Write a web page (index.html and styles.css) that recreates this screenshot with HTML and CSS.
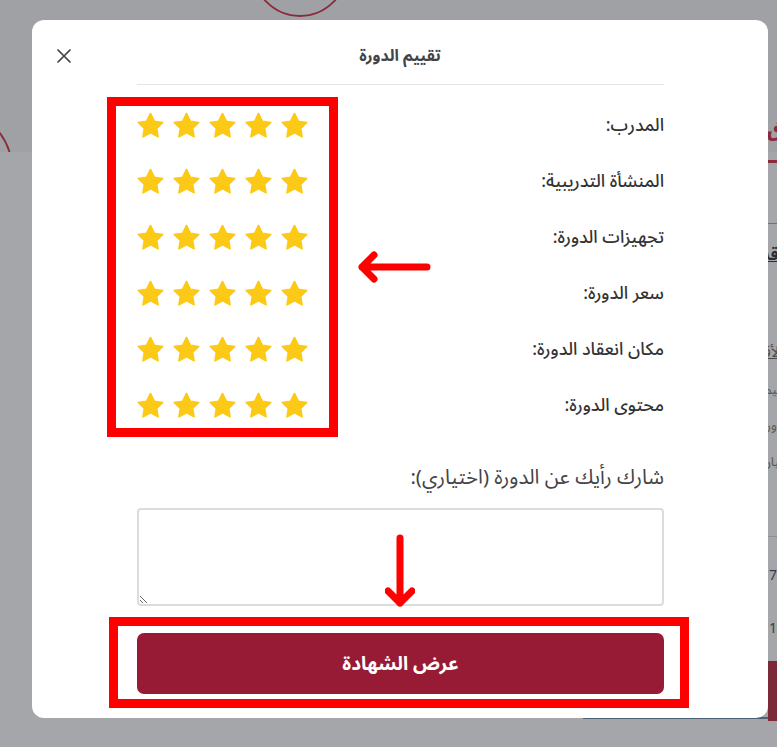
FILE: index.html
```html
<!DOCTYPE html>
<html lang="ar">
<head>
<meta charset="utf-8">
<title>تقييم الدورة</title>
<link rel="stylesheet" href="styles.css">
</head>
<body>
<div class="page">
  <svg class="band" width="777" height="152" viewBox="0 0 777 152">
    <rect x="0" y="0" width="777" height="152" fill="#a0a1a5"/>
    <circle cx="300" cy="-31" r="47" fill="none" stroke="#8a2b3b" stroke-width="1.8"/>
    <circle cx="-50" cy="170" r="62" fill="none" stroke="#8a2b3b" stroke-width="1.8"/>
    <text x="766" y="136" fill="#8a2b3b" font-size="22" font-weight="700" font-family="DejaVu Sans, sans-serif">ق</text>
  </svg>
  <div class="lower">
    <div class="side-card">
      <div class="sc-bar"></div>
      <div class="sc-blue"></div>
      <div class="sc-title">أقسام الدورة</div>
      <div class="sc-link">الأقسام</div>
      <div class="sc-text">قيمة</div>
      <div class="sc-text">دورة</div>
      <div class="sc-text">بيان</div>
      <div class="sc-line"></div>
      <div class="sc-num">7</div>
      <div class="sc-num">1</div>
      <div class="sc-btn"></div>
    </div>
  </div>
</div>

<div class="overlay">
  <div class="modal">
    <div class="modal-header">
      <span></span>
      <h2 class="modal-title">تقييم الدورة</h2>
      <button class="close-btn" aria-label="إغلاق">
        <svg width="16" height="16" viewBox="0 0 16 16"><path d="M2 2 L14 14 M14 2 L2 14" stroke="#444" stroke-width="1.7" stroke-linecap="round" fill="none"/></svg>
      </button>
    </div>
    <div class="modal-body">
      <div class="divider"></div>
      <div class="ratings">
        <div class="rating-row"><span class="rating-label">المدرب:</span><div class="stars"><svg class="star" viewBox="0 0 24 24"><path d="M12 1.3L15.38 8.15 22.94 9.25 17.47 14.58 18.76 22.1 12 18.55 5.24 22.1 6.53 14.58 1.06 9.25 8.62 8.15Z"/></svg><svg class="star" viewBox="0 0 24 24"><path d="M12 1.3L15.38 8.15 22.94 9.25 17.47 14.58 18.76 22.1 12 18.55 5.24 22.1 6.53 14.58 1.06 9.25 8.62 8.15Z"/></svg><svg class="star" viewBox="0 0 24 24"><path d="M12 1.3L15.38 8.15 22.94 9.25 17.47 14.58 18.76 22.1 12 18.55 5.24 22.1 6.53 14.58 1.06 9.25 8.62 8.15Z"/></svg><svg class="star" viewBox="0 0 24 24"><path d="M12 1.3L15.38 8.15 22.94 9.25 17.47 14.58 18.76 22.1 12 18.55 5.24 22.1 6.53 14.58 1.06 9.25 8.62 8.15Z"/></svg><svg class="star" viewBox="0 0 24 24"><path d="M12 1.3L15.38 8.15 22.94 9.25 17.47 14.58 18.76 22.1 12 18.55 5.24 22.1 6.53 14.58 1.06 9.25 8.62 8.15Z"/></svg></div></div>
        <div class="rating-row"><span class="rating-label">المنشأة التدريبية:</span><div class="stars"><svg class="star" viewBox="0 0 24 24"><path d="M12 1.3L15.38 8.15 22.94 9.25 17.47 14.58 18.76 22.1 12 18.55 5.24 22.1 6.53 14.58 1.06 9.25 8.62 8.15Z"/></svg><svg class="star" viewBox="0 0 24 24"><path d="M12 1.3L15.38 8.15 22.94 9.25 17.47 14.58 18.76 22.1 12 18.55 5.24 22.1 6.53 14.58 1.06 9.25 8.62 8.15Z"/></svg><svg class="star" viewBox="0 0 24 24"><path d="M12 1.3L15.38 8.15 22.94 9.25 17.47 14.58 18.76 22.1 12 18.55 5.24 22.1 6.53 14.58 1.06 9.25 8.62 8.15Z"/></svg><svg class="star" viewBox="0 0 24 24"><path d="M12 1.3L15.38 8.15 22.94 9.25 17.47 14.58 18.76 22.1 12 18.55 5.24 22.1 6.53 14.58 1.06 9.25 8.62 8.15Z"/></svg><svg class="star" viewBox="0 0 24 24"><path d="M12 1.3L15.38 8.15 22.94 9.25 17.47 14.58 18.76 22.1 12 18.55 5.24 22.1 6.53 14.58 1.06 9.25 8.62 8.15Z"/></svg></div></div>
        <div class="rating-row"><span class="rating-label">تجهيزات الدورة:</span><div class="stars"><svg class="star" viewBox="0 0 24 24"><path d="M12 1.3L15.38 8.15 22.94 9.25 17.47 14.58 18.76 22.1 12 18.55 5.24 22.1 6.53 14.58 1.06 9.25 8.62 8.15Z"/></svg><svg class="star" viewBox="0 0 24 24"><path d="M12 1.3L15.38 8.15 22.94 9.25 17.47 14.58 18.76 22.1 12 18.55 5.24 22.1 6.53 14.58 1.06 9.25 8.62 8.15Z"/></svg><svg class="star" viewBox="0 0 24 24"><path d="M12 1.3L15.38 8.15 22.94 9.25 17.47 14.58 18.76 22.1 12 18.55 5.24 22.1 6.53 14.58 1.06 9.25 8.62 8.15Z"/></svg><svg class="star" viewBox="0 0 24 24"><path d="M12 1.3L15.38 8.15 22.94 9.25 17.47 14.58 18.76 22.1 12 18.55 5.24 22.1 6.53 14.58 1.06 9.25 8.62 8.15Z"/></svg><svg class="star" viewBox="0 0 24 24"><path d="M12 1.3L15.38 8.15 22.94 9.25 17.47 14.58 18.76 22.1 12 18.55 5.24 22.1 6.53 14.58 1.06 9.25 8.62 8.15Z"/></svg></div></div>
        <div class="rating-row"><span class="rating-label">سعر الدورة:</span><div class="stars"><svg class="star" viewBox="0 0 24 24"><path d="M12 1.3L15.38 8.15 22.94 9.25 17.47 14.58 18.76 22.1 12 18.55 5.24 22.1 6.53 14.58 1.06 9.25 8.62 8.15Z"/></svg><svg class="star" viewBox="0 0 24 24"><path d="M12 1.3L15.38 8.15 22.94 9.25 17.47 14.58 18.76 22.1 12 18.55 5.24 22.1 6.53 14.58 1.06 9.25 8.62 8.15Z"/></svg><svg class="star" viewBox="0 0 24 24"><path d="M12 1.3L15.38 8.15 22.94 9.25 17.47 14.58 18.76 22.1 12 18.55 5.24 22.1 6.53 14.58 1.06 9.25 8.62 8.15Z"/></svg><svg class="star" viewBox="0 0 24 24"><path d="M12 1.3L15.38 8.15 22.94 9.25 17.47 14.58 18.76 22.1 12 18.55 5.24 22.1 6.53 14.58 1.06 9.25 8.62 8.15Z"/></svg><svg class="star" viewBox="0 0 24 24"><path d="M12 1.3L15.38 8.15 22.94 9.25 17.47 14.58 18.76 22.1 12 18.55 5.24 22.1 6.53 14.58 1.06 9.25 8.62 8.15Z"/></svg></div></div>
        <div class="rating-row"><span class="rating-label">مكان انعقاد الدورة:</span><div class="stars"><svg class="star" viewBox="0 0 24 24"><path d="M12 1.3L15.38 8.15 22.94 9.25 17.47 14.58 18.76 22.1 12 18.55 5.24 22.1 6.53 14.58 1.06 9.25 8.62 8.15Z"/></svg><svg class="star" viewBox="0 0 24 24"><path d="M12 1.3L15.38 8.15 22.94 9.25 17.47 14.58 18.76 22.1 12 18.55 5.24 22.1 6.53 14.58 1.06 9.25 8.62 8.15Z"/></svg><svg class="star" viewBox="0 0 24 24"><path d="M12 1.3L15.38 8.15 22.94 9.25 17.47 14.58 18.76 22.1 12 18.55 5.24 22.1 6.53 14.58 1.06 9.25 8.62 8.15Z"/></svg><svg class="star" viewBox="0 0 24 24"><path d="M12 1.3L15.38 8.15 22.94 9.25 17.47 14.58 18.76 22.1 12 18.55 5.24 22.1 6.53 14.58 1.06 9.25 8.62 8.15Z"/></svg><svg class="star" viewBox="0 0 24 24"><path d="M12 1.3L15.38 8.15 22.94 9.25 17.47 14.58 18.76 22.1 12 18.55 5.24 22.1 6.53 14.58 1.06 9.25 8.62 8.15Z"/></svg></div></div>
        <div class="rating-row"><span class="rating-label">محتوى الدورة:</span><div class="stars"><svg class="star" viewBox="0 0 24 24"><path d="M12 1.3L15.38 8.15 22.94 9.25 17.47 14.58 18.76 22.1 12 18.55 5.24 22.1 6.53 14.58 1.06 9.25 8.62 8.15Z"/></svg><svg class="star" viewBox="0 0 24 24"><path d="M12 1.3L15.38 8.15 22.94 9.25 17.47 14.58 18.76 22.1 12 18.55 5.24 22.1 6.53 14.58 1.06 9.25 8.62 8.15Z"/></svg><svg class="star" viewBox="0 0 24 24"><path d="M12 1.3L15.38 8.15 22.94 9.25 17.47 14.58 18.76 22.1 12 18.55 5.24 22.1 6.53 14.58 1.06 9.25 8.62 8.15Z"/></svg><svg class="star" viewBox="0 0 24 24"><path d="M12 1.3L15.38 8.15 22.94 9.25 17.47 14.58 18.76 22.1 12 18.55 5.24 22.1 6.53 14.58 1.06 9.25 8.62 8.15Z"/></svg><svg class="star" viewBox="0 0 24 24"><path d="M12 1.3L15.38 8.15 22.94 9.25 17.47 14.58 18.76 22.1 12 18.55 5.24 22.1 6.53 14.58 1.06 9.25 8.62 8.15Z"/></svg></div></div>
        <div class="annot-box annot-stars"></div>
        <svg class="annot-arrow-left" width="80" height="40" viewBox="0 0 80 40"><path d="M7 20 H72 M19 8 L7 20 L19 32" stroke="#ff0000" stroke-width="7" stroke-linecap="round" stroke-linejoin="round" fill="none"/></svg>
      </div>
      <label class="opinion-label" for="opinion">شارك رأيك عن الدورة (اختياري):</label>
      <textarea id="opinion" class="opinion"></textarea>
      <div class="action">
        <button class="submit-btn">عرض الشهادة</button>
        <div class="annot-box annot-btn"></div>
        <svg class="annot-arrow-down" width="30" height="80" viewBox="0 0 30 80"><path d="M15 6 V71 M3 59 L15 71 L27 59" stroke="#ff0000" stroke-width="7" stroke-linecap="round" stroke-linejoin="round" fill="none"/></svg>
      </div>
    </div>
  </div>
</div>
</body>
</html>
```
FILE: styles.css
```css
html, body {
  margin: 0;
  padding: 0;
}
body {
  width: 777px;
  height: 747px;
  overflow: hidden;
  background: #a5a6aa;
  font-family: "Noto Sans Arabic", "DejaVu Sans", "Noto Sans", sans-serif;
}
.page {
  width: 777px;
  height: 747px;
}
.band {
  display: block;
}
.lower {
  display: flex;
  justify-content: flex-end;
  width: 777px;
}
.side-card {
  width: 210px;
  margin-right: -16px;
  direction: rtl;
  text-align: right;
  padding-right: 0;
  height: 567px;
  border-bottom: 2px solid #4d6276;
  box-sizing: border-box;
}
.sc-bar {
  margin-top: 8px;
  height: 3px;
  background: #8a2b3b;
}
.sc-blue {
  margin-top: 60px;
  height: 1px;
  background: #5a7896;
}
.sc-title {
  margin-top: 14px;
  font-size: 16px;
  font-weight: 700;
  color: #2c2c30;
  text-decoration: underline;
  padding-right: 10px;
}
.sc-link {
  margin-top: 64px;
  font-size: 15px;
  color: #4a4b50;
  text-decoration: underline;
  padding-right: 10px;
}
.sc-text {
  margin-top: 8px;
  font-size: 13px;
  color: #55565b;
  padding-right: 10px;
}
.sc-line {
  margin-top: 60px;
  height: 1px;
  background: #8e8f93;
}
.sc-num {
  margin-top: 24px;
  font-size: 14px;
  color: #3a3b3f;
  direction: ltr;
  text-align: left;
  padding-left: 186px;
}
.sc-btn {
  margin-top: 18px;
  height: 60px;
  background: #7b2a38;
  margin-left: 185px;
}

.overlay {
  position: fixed;
  inset: 0;
  display: flex;
  align-items: flex-start;
  padding: 20px 0 0 32px;
}
.modal {
  width: 736px;
  height: 698px;
  background: #ffffff;
  border-radius: 12px;
  direction: rtl;
  box-sizing: border-box;
  padding: 0 24px;
}
.modal-header {
  display: grid;
  grid-template-columns: 1fr auto 1fr;
  align-items: center;
  height: 64px;
  padding-top: 8px;
  box-sizing: border-box;
}
.modal-title {
  margin: 0;
  font-size: 16px;
  font-weight: 700;
  color: #444446;
  line-height: 24px;
}
.close-btn {
  justify-self: end;
  border: 0;
  background: none;
  padding: 0;
  width: 16px;
  height: 16px;
  display: flex;
  cursor: pointer;
}
.modal-body {
  margin: 0 80px 0 81px;
  display: flex;
  flex-direction: column;
}
.divider {
  height: 1px;
  background: #e3e4e7;
}
.ratings {
  position: relative;
  margin-top: 12px;
  display: flex;
  flex-direction: column;
}
.rating-row {
  height: 56px;
  display: flex;
  align-items: center;
  justify-content: space-between;
}
.rating-label {
  font-size: 17.6px;
  font-weight: 500;
  color: #333335;
}
.stars {
  display: flex;
  gap: 9px;
}
.star {
  width: 27px;
  height: 27px;
  display: block;
}
.star path {
  fill: #fcca16;
  stroke: #fcca16;
  stroke-width: 1.4;
  stroke-linejoin: round;
}
.annot-box {
  position: absolute;
  border: 9px solid #ff0000;
  box-sizing: border-box;
  pointer-events: none;
}
.annot-stars {
  left: -30px;
  top: 0;
  width: 231px;
  height: 340px;
}
.annot-arrow-left {
  position: absolute;
  left: 218px;
  top: 150px;
}
.opinion-label {
  margin-top: 30px;
  font-size: 20.4px;
  line-height: 30px;
  color: #444446;
}
.opinion {
  margin-top: 15px;
  display: block;
  width: 100%;
  height: 98px;
  box-sizing: border-box;
  border: 2px solid #dcdcdc;
  border-radius: 4px;
  resize: vertical;
  font-family: inherit;
  background: #fff;
}
.action {
  position: relative;
  margin-top: 27px;
}
.submit-btn {
  display: block;
  width: 100%;
  height: 61px;
  border: 0;
  border-radius: 7px;
  background: #971b34;
  color: #ffffff;
  font-family: inherit;
  font-size: 19px;
  font-weight: 700;
  cursor: pointer;
}
.annot-btn {
  left: -28px;
  top: -16px;
  width: 580px;
  height: 91px;
}
.annot-arrow-down {
  position: absolute;
  left: 248px;
  top: -101px;
}
```
